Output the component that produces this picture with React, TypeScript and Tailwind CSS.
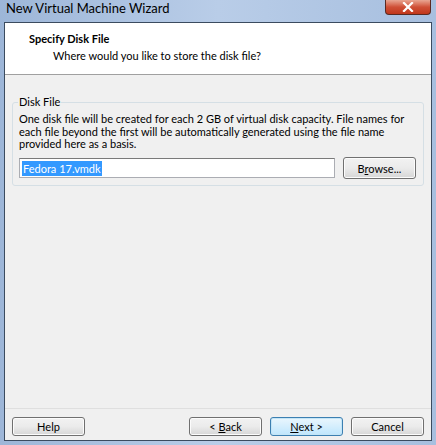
import React from 'react';

// Windows 7 style wizard dialog: "Specify Disk File" step
const font = "font-['Segoe_UI','Lato',sans-serif]";

function WinButton({ children, className = '', active = false }: { children: React.ReactNode; className?: string; active?: boolean }) {
  return (
    <button
      className={`h-[19px] rounded-[3px] border text-[11px] leading-none text-black ${
        active
          ? 'border-[#3c7fb1] bg-gradient-to-b from-[#eaf6fd] to-[#bee6fd] shadow-[inset_0_0_0_1px_#c4e5f6]'
          : 'border-[#707070] bg-gradient-to-b from-[#f2f2f2] via-[#ebebeb] to-[#d6d6d6] shadow-[inset_0_0_0_1px_#fcfcfc]'
      } ${className}`}
    >
      {children}
    </button>
  );
}

export default function App() {
  return (
    <div className={`w-[436px] h-[445px] flex flex-col bg-gradient-to-r from-[#9db6d8] via-[#b9cde8] to-[#a7bfdf] ${font}`}>
      {/* Title bar */}
      <div className="h-[22px] flex items-start justify-between pl-[6px] pr-[5px]">
        <span className="text-[13px] leading-[17px] text-black">New Virtual Machine Wizard</span>
        <div className="w-[46px] h-[15px] rounded-b-[4px] border border-t-0 border-[#5a2a22] bg-gradient-to-b from-[#e8a592] via-[#cf4f36] to-[#c0371b] flex items-center justify-center">
          <svg width="12" height="10" viewBox="0 0 12 10">
            <path d="M2 1 L10 9 M10 1 L2 9" stroke="#fff" strokeWidth="2.2" strokeLinecap="square" />
          </svg>
        </div>
      </div>

      {/* Client area */}
      <div className="flex-1 mx-[4px] mb-[4px] border border-[#3b4b5f] bg-[#f0f0f0] flex flex-col">
        {/* Header */}
        <div className="h-[52px] bg-white border-b border-[#a0a0a0] pl-[24px] pt-[9px]">
          <div className="text-[11px] font-bold leading-[14px] text-black">Specify Disk File</div>
          <div className="text-[11px] leading-[14px] text-black pl-[24px] pt-[3px]">Where would you like to store the disk file?</div>
        </div>

        {/* Group box */}
        <div className="px-[7px] pt-[20px]">
          <fieldset className="border border-[#d5dfe5] rounded-[3px] px-[6px] pb-[6px]">
            <legend className="text-[11px] leading-[14px] px-[1px] ml-[-1px]">Disk File</legend>
            <p className="text-[11px] leading-[12.7px] text-black pt-[4px]">
              One disk file will be created for each 2 GB of virtual disk capacity. File names for each file beyond the first will be automatically generated using the file name provided here as a basis.
            </p>
            <div className="flex items-center gap-[8px] mt-[6px]">
              <div className="w-[316px] h-[20px] border border-[#abadb3] border-t-[#7a7a7a] bg-white flex items-center pl-[2px]">
                <span className="bg-[#3399ff] text-white text-[11px] leading-[15px] px-[1px]">Fedora 17.vmdk</span>
              </div>
              <WinButton className="w-[73px] h-[22px]">
                B<span className="underline">r</span>owse...
              </WinButton>
            </div>
          </fieldset>
        </div>

        <div className="flex-1" />

        {/* Footer */}
        <div className="border-t border-[#dfdfdf] h-[32px] flex items-start pt-[8px] px-[7px]">
          <WinButton className="w-[73px]">Help</WinButton>
          <div className="flex-1" />
          <div className="flex gap-[8px]">
            <WinButton className="w-[73px]">
              &lt; <span className="underline">B</span>ack
            </WinButton>
            <WinButton className="w-[73px]" active>
              <span className="underline">N</span>ext &gt;
            </WinButton>
            <WinButton className="w-[73px]">Cancel</WinButton>
          </div>
        </div>
      </div>
    </div>
  );
}
